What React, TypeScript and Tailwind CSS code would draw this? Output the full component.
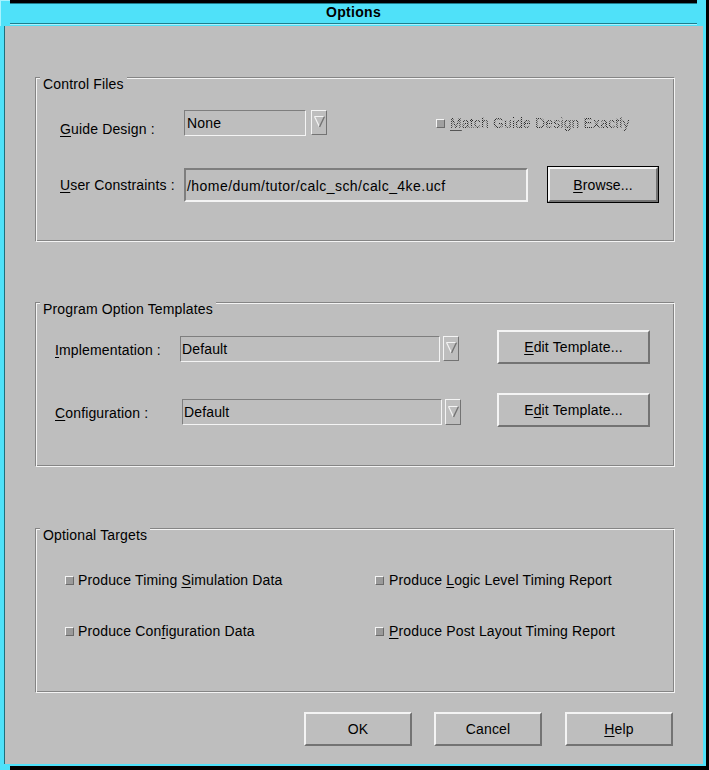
import React from "react";

const GRAY = "bg-[#bebebe]";

const U = ({ children }: { children: React.ReactNode }) => (
  <span className="underline decoration-1 underline-offset-[2px]">{children}</span>
);

const raised =
  "border-2 border-t-[#f4f4f4] border-l-[#f4f4f4] border-b-[#737373] border-r-[#737373]";

function Button({ children, className = "" }: { children: React.ReactNode; className?: string }) {
  return (
    <div className={`flex items-center justify-center bg-[#bebebe] ${raised} ${className}`}>
      <span>{children}</span>
    </div>
  );
}

function Arrow({ className = "" }: { className?: string }) {
  return (
    <div
      className={`flex items-center justify-center w-[16px] border border-t-[#f4f4f4] border-l-[#f4f4f4] border-b-[#737373] border-r-[#737373] ${className}`}
    >
      <svg width="11" height="12" viewBox="0 0 11 12" className="mt-[-1px]">
        <line x1="0.5" y1="0.5" x2="10.5" y2="0.5" stroke="#f4f4f4" strokeWidth="1" />
        <line x1="0.5" y1="0.5" x2="5.5" y2="11" stroke="#f4f4f4" strokeWidth="1.2" />
        <line x1="10.5" y1="0.5" x2="5.5" y2="11" stroke="#737373" strokeWidth="1.4" />
      </svg>
    </div>
  );
}

function Check({ className = "" }: { className?: string }) {
  return (
    <div
      className={`w-[9px] h-[9px] shrink-0 border border-t-[#f4f4f4] border-l-[#f4f4f4] border-b-[#6a6a6a] border-r-[#6a6a6a] bg-[#9a9a9a] ${className}`}
    />
  );
}

function Group({ title, children }: { title: string; children: React.ReactNode }) {
  return (
    <div className="flex flex-col h-[165px] border border-t-[#858585] border-l-[#858585] border-b-[#f4f4f4] border-r-[#f4f4f4] shadow-[inset_1px_1px_0_#f4f4f4,inset_-1px_-1px_0_#858585]">
      <div className="-mt-[2px] ml-[4px] self-start bg-[#bebebe] px-[3px]">{title}</div>
      {children}
    </div>
  );
}

const sunken1 =
  "border border-t-[#7e7e7e] border-l-[#7e7e7e] border-b-[#f4f4f4] border-r-[#f4f4f4]";

export default function App() {
  return (
    <div className="w-[709px] h-[770px] bg-black font-['Liberation_Sans',Arial,sans-serif] text-[14px] leading-[16px] tracking-[0.15px] text-black">
      <div className="w-[706px] h-[766px] flex flex-col bg-[#4fe1f9]">
        {/* title bar */}
        <div className="flex h-[26px]">
          <div className="w-[10px] h-full bg-[#4fe1f9] border-t border-l border-[#a6f3ff]" />
          <div className="flex-1 flex flex-col">
            <div className="h-[3px] bg-black" />
            <div className="h-[1px] bg-[#a6f3ff]" />
            <div className="flex-1 bg-[#4fe1f9] border-t border-[#1f7d8c] flex items-center justify-center pb-[3px] font-bold text-[14px] tracking-[0.3px]">
              Options
            </div>
            <div className="h-[1px] bg-[#1f7d8c]" />
            <div className="h-[1px] bg-[#a6f3ff]" />
            <div className="h-[1px] bg-[#4fe1f9]" />
          </div>
          <div className="w-[9px] bg-[#4fe1f9]" />
        </div>

        {/* body */}
        <div className="flex flex-1 pl-[4px] pr-[3px] pb-[2px]">
          <div className={`flex-1 border-l border-[#1f6f7c] ${GRAY} flex flex-col pl-[30px] pr-[28px]`}>
            {/* Control Files */}
            <div className="mt-[51px]">
              <Group title="Control Files">
                <div className="mt-[18px] flex h-[26px] pl-[24px]">
                  <div className="w-[124px] mt-[11px]">
                    <U>G</U>uide Design :
                  </div>
                  <div className={`w-[122px] h-[26px] ${sunken1} pl-[2px] pt-[4px]`}>None</div>
                  <Arrow className="ml-[5px] h-[25px]" />
                  <div className="ml-[109px] mt-[5px] flex items-center gap-[5px] h-[16px]">
                    <Check className="bg-[#a0a0a0]" />
                    <span className="bg-[image:conic-gradient(#2a2a2a_25%,#bebebe_0_50%,#2a2a2a_0_75%,#bebebe_0)] bg-size-[2px_2px] bg-clip-text text-transparent">
                      <span className="underline decoration-1 underline-offset-[2px] decoration-[#555]">M</span>
                      atch Guide Design Exactly
                    </span>
                  </div>
                </div>
                <div className="mt-[30px] flex items-center h-[37px] pl-[24px]">
                  <div className="w-[124px]">
                    <U>U</U>ser Constraints :
                  </div>
                  <div className="w-[344px] h-[34px] border-2 border-t-[#7e7e7e] border-l-[#7e7e7e] border-b-[#f4f4f4] border-r-[#f4f4f4] flex items-center pl-[1px] pt-[2px] tracking-[0.45px]">
                    /home/dum/tutor/calc_sch/calc_4ke.ucf
                  </div>
                  <div className="ml-[19px] w-[112px] h-[37px] border border-black flex">
                    <Button className="flex-1">
                      <U>B</U>rowse...
                    </Button>
                  </div>
                </div>
              </Group>
            </div>

            {/* Program Option Templates */}
            <div className="mt-[60px]">
              <Group title="Program Option Templates">
                <div className="mt-[13px] flex h-[34px] pl-[19px]">
                  <div className="w-[125px] mt-[12px]">
                    <U>I</U>mplementation :
                  </div>
                  <div className={`mt-[6px] w-[260px] h-[26px] ${sunken1} pl-[1px] pt-[4px]`}>Default</div>
                  <Arrow className="mt-[6px] ml-[3px] h-[25px]" />
                  <Button className="ml-[38px] w-[153px] h-[34px]">
                    <U>E</U>dit Template...
                  </Button>
                </div>
                <div className="mt-[29px] flex h-[34px] pl-[19px]">
                  <div className="w-[127px] mt-[12px]">
                    <U>C</U>onfiguration :
                  </div>
                  <div className={`mt-[6px] w-[260px] h-[26px] ${sunken1} pl-[1px] pt-[4px]`}>Default</div>
                  <Arrow className="mt-[6px] ml-[3px] h-[26px]" />
                  <Button className="ml-[36px] w-[153px] h-[34px]">
                    E<U>d</U>it Template...
                  </Button>
                </div>
              </Group>
            </div>

            {/* Optional Targets */}
            <div className="mt-[61px]">
              <Group title="Optional Targets">
                <div className="mt-[29px] flex h-[16px] pl-[29px]">
                  <div className="w-[310px] flex items-center gap-[4px]">
                    <Check />
                    <span>
                      Produce Timing <U>S</U>imulation Data
                    </span>
                  </div>
                  <div className="flex items-center gap-[5px]">
                    <Check />
                    <span>
                      Produce <U>L</U>ogic Level Timing Report
                    </span>
                  </div>
                </div>
                <div className="mt-[35px] flex h-[16px] pl-[29px]">
                  <div className="w-[310px] flex items-center gap-[4px]">
                    <Check />
                    <span>
                      Produce Con<U>f</U>iguration Data
                    </span>
                  </div>
                  <div className="flex items-center gap-[5px]">
                    <Check />
                    <span>
                      <U>P</U>roduce Post Layout Timing Report
                    </span>
                  </div>
                </div>
              </Group>
            </div>

            {/* Buttons */}
            <div className="mt-[19px] flex">
              <Button className="ml-[269px] w-[108px] h-[34px]">OK</Button>
              <Button className="ml-[22px] w-[108px] h-[34px]">Cancel</Button>
              <Button className="ml-[23px] w-[108px] h-[34px]">
                <U>H</U>elp
              </Button>
            </div>
          </div>
        </div>
      </div>
      <div className="w-[10px] h-[4px] bg-[#4fe1f9]" />
    </div>
  );
}
